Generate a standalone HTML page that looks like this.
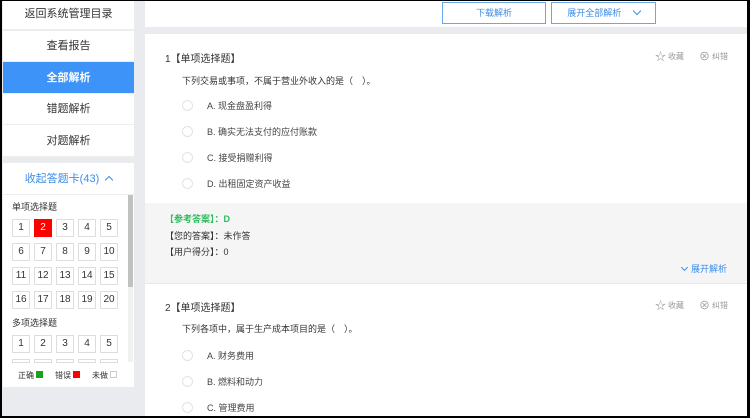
<!DOCTYPE html><html><head><meta charset="utf-8"><style>
*{margin:0;padding:0;box-sizing:border-box}
body{width:750px;height:418px;background:#000;font-family:"Liberation Sans","Noto Sans CJK SC",sans-serif;position:relative;overflow:hidden;font-size:9px;color:#333}
.a{position:absolute}
#wrap{position:absolute;left:2px;top:1px;width:745px;height:415px;background:#e9ebee;overflow:hidden}
.nav{position:absolute;left:1px;width:131px;background:#fff;text-align:center;font-size:11px;color:#333;border-bottom:1px solid #eee}
.box{position:absolute;width:18px;height:18px;border:1px solid #ddd;background:#fff;font-size:10px;text-align:center;line-height:16px;color:#333}
.btn{position:absolute;top:1px;height:22px;border:1px solid #6aa6ea;background:#fff;color:#3d8ce8;font-size:9px;text-align:center;line-height:20px}
.opt{position:absolute;left:180px;font-size:9px;color:#444}
.opt i{position:absolute;left:0;top:-1px;width:11px;height:11px;border:1px solid #e3e3e3;border-radius:50%}
.opt span{position:absolute;left:25px;white-space:nowrap;top:-2px}
.tool{position:absolute;font-size:8px;color:#999;white-space:nowrap}
.tool b{font-weight:normal;font-size:11px;vertical-align:-1px;margin-right:2px}
</style></head><body><div id="wrap">
<div class="nav" style="top:0;height:29px;line-height:27px">返回系统管理目录</div>
<div class="nav" style="top:30px;height:31px;line-height:31px">查看报告</div>
<div class="nav" style="top:61px;height:32px;line-height:32px;background:#3d93f7;color:#fff;font-weight:bold">全部解析</div>
<div class="nav" style="top:93px;height:31px;line-height:31px">错题解析</div>
<div class="nav" style="top:124px;height:32px;line-height:32px">对题解析</div>
<div class="a" style="left:1px;top:162px;width:131px;height:224px;background:#fff"></div>
<div class="a" style="left:1px;top:169px;width:131px;text-align:center;color:#3d8ce8;font-size:11px">收起答题卡(43) <span style="display:inline-block;width:6px;height:6px;border-left:1.5px solid #3d8ce8;border-top:1.5px solid #3d8ce8;transform:rotate(45deg);margin-left:4px;vertical-align:-1px"></span></div>
<div class="a" style="left:1px;top:193px;width:131px;border-top:1px solid #eee"></div>
<div class="a" style="left:10px;top:199px;font-size:9px">单项选择题</div>
<div class="a" style="left:10px;top:315px;font-size:9px">多项选择题</div>
<div class="a" style="left:126px;top:194px;width:5px;height:167px;background:#f1f1f1"></div>
<div class="a" style="left:126px;top:194px;width:5px;height:92px;background:#c1c1c1"></div>
<div class="a" style="left:16px;top:369px;font-size:8px;color:#333">正确 <span style="display:inline-block;width:7px;height:7px;background:#1aa31a"></span></div>
<div class="a" style="left:53px;top:369px;font-size:8px;color:#333">错误 <span style="display:inline-block;width:7px;height:7px;background:#f00"></span></div>
<div class="a" style="left:90px;top:369px;font-size:8px;color:#333">未做 <span style="display:inline-block;width:7px;height:7px;border:1px solid #ccc"></span></div>
<div id="g"></div>
<div class="a" style="left:143px;top:0;width:602px;height:26px;background:#fff"></div>
<div class="btn" style="left:440px;width:104px">下载解析</div>
<div class="btn" style="left:549px;width:105px">展开全部解析 <span style="display:inline-block;width:6px;height:6px;border-right:1.5px solid #3d8ce8;border-bottom:1.5px solid #3d8ce8;transform:rotate(45deg);margin-left:10px;vertical-align:2px"></span></div>
<div class="a" style="left:143px;top:33px;width:602px;height:382px;background:#fff"></div>
<div class="a" style="left:163px;top:49px;font-size:10px">1【单项选择题】</div>
<div class="tool" style="left:653px;top:47px"><b>☆</b>收藏</div><div class="tool" style="left:697px;top:47px"><b>⊗</b>纠错</div>
<div class="a" style="left:180px;top:73px">下列交易或事项，不属于营业外收入的是（　）。</div>
<div class="opt" style="top:100px"><i></i><span>A. 现金盘盈利得</span></div>
<div class="opt" style="top:126px"><i></i><span>B. 确实无法支付的应付账款</span></div>
<div class="opt" style="top:152px"><i></i><span>C. 接受捐赠利得</span></div>
<div class="opt" style="top:178px"><i></i><span>D. 出租固定资产收益</span></div>
<div class="a" style="left:143px;top:202px;width:602px;height:81px;background:#f5f5f5;border-bottom:1px solid #e8e8e8"></div>
<div class="a" style="left:163px;top:211px;color:#2dbb5d;font-weight:bold">【参考答案】：D</div>
<div class="a" style="left:163px;top:228px">【您的答案】：未作答</div>
<div class="a" style="left:163px;top:244px">【用户得分】：0</div>
<div class="a" style="left:680px;top:261px;color:#3d8ce8"><span style="display:inline-block;width:5px;height:5px;border-right:1.5px solid #3d8ce8;border-bottom:1.5px solid #3d8ce8;transform:rotate(45deg);margin-right:4px;vertical-align:2px"></span>展开解析</div>
<div class="a" style="left:163px;top:298px;font-size:10px">2【单项选择题】</div>
<div class="tool" style="left:653px;top:296px"><b>☆</b>收藏</div><div class="tool" style="left:697px;top:296px"><b>⊗</b>纠错</div>
<div class="a" style="left:180px;top:321px">下列各项中，属于生产成本项目的是（　）。</div>
<div class="opt" style="top:350px"><i></i><span>A. 财务费用</span></div>
<div class="opt" style="top:376px"><i></i><span>B. 燃料和动力</span></div>
<div class="opt" style="top:402px"><i></i><span>C. 管理费用</span></div>
</div>
<script>
var g=document.getElementById('g'),h='';
var ys=[218,242,266,290],xs=[10,32,54,76,98];
for(var r=0;r<4;r++)for(var c=0;c<5;c++){var n=r*5+c+1;h+='<div class="box" style="left:'+xs[c]+'px;top:'+ys[r]+'px'+(n==2?';background:#f00;color:#fff;border-color:#f00':'')+'">'+n+'</div>';}
for(var c=0;c<5;c++){h+='<div class="box" style="left:'+xs[c]+'px;top:334px">'+(c+1)+'</div>';h+='<div class="box" style="left:'+xs[c]+'px;top:358px;height:4px"></div>';}
g.innerHTML=h;
</script>
</body></html>
